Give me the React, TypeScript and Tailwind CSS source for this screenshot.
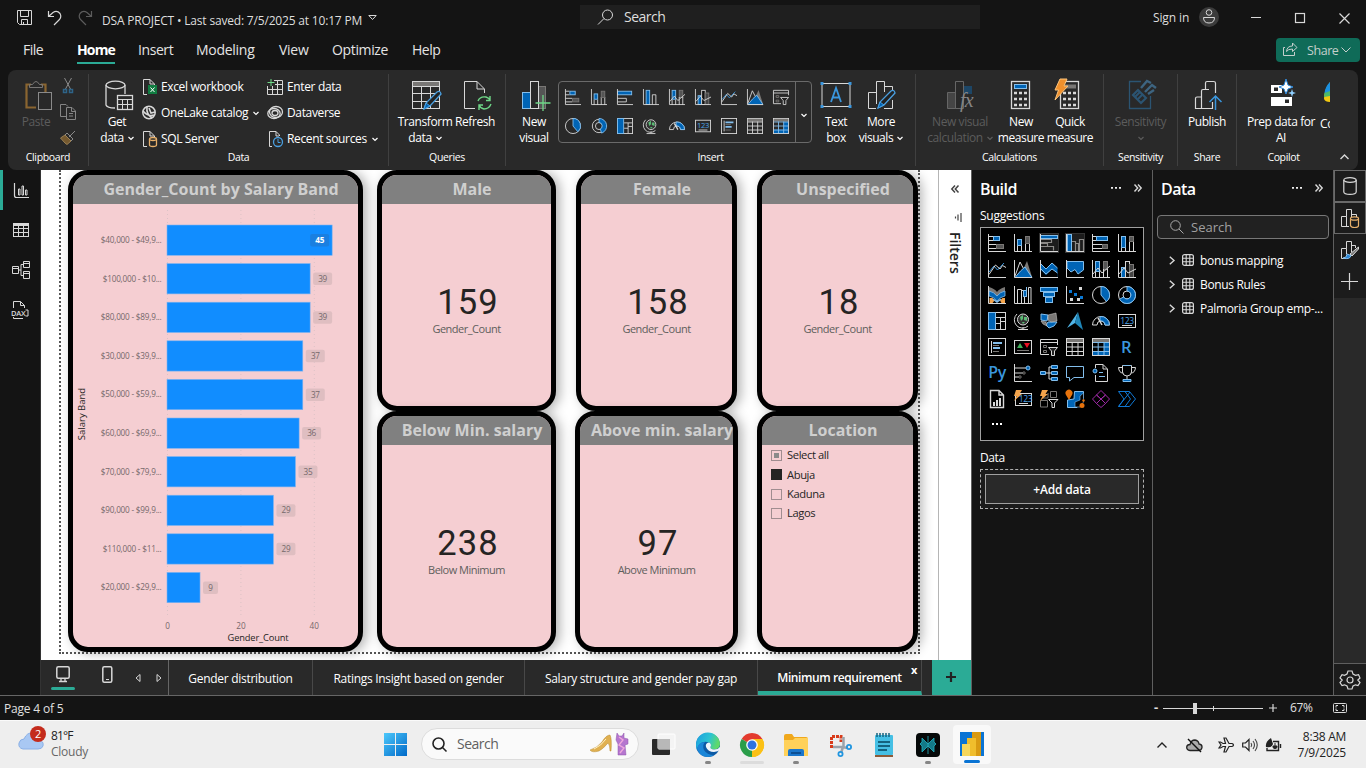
import React from "react";
import type { ReactNode } from "react";

const W = "#d8d8d8";
const B = "#0064b5";
const L = "#83beec";
const G = "#797775";

/* ---------- visual gallery icons, all drawn on an 18 x 18 grid ---------- */

const axis = <path d="M.5 0V17.5H18" stroke={W} fill="none" />;

const visuals: Record<string, ReactNode> = {
  stackedBar: (
    <>
      <path d="M.5 2.5H5M.5 6.5H5M.5 10.5H8M.5 14.5H8" stroke={W} fill="none" />
      <rect x="5.5" y="2.5" width="6" height="4" fill={B} stroke={L} />
      <rect x="8.5" y="10.5" width="7" height="4" fill="#555" stroke={G} />
      {axis}
    </>
  ),
  stackedColumn: (
    <>
      <path d="M3.5 18V12M7.5 18V12M11.5 18V9M15.5 18V9" stroke={W} fill="none" />
      <rect x="3.5" y="5.5" width="4" height="6" fill={B} stroke={L} />
      <rect x="11.5" y="2.5" width="4" height="7" fill="#555" stroke={G} />
      {axis}
    </>
  ),
  clusteredBar: (
    <>
      <rect x=".5" y="2.5" width="16" height="4" fill={B} stroke={L} />
      <path d="M.5 10.5H10.5V14.5H.5" stroke={W} fill="none" />
      {axis}
    </>
  ),
  clusteredColumn: (
    <>
      <rect x="3.5" y="1.5" width="4" height="16" fill={B} stroke={L} />
      <path d="M10.5 17.5V6.5H14.5V17.5" stroke={W} fill="none" />
      {axis}
    </>
  ),
  clusteredBarOn: (
    <>
      <rect x="-.5" y="-.5" width="19" height="19" fill="#1c1c1c" stroke="#333" />
      <rect x=".5" y="1.5" width="17" height="3" fill={B} stroke={L} />
      <path d="M.5 5.5H11.5V8.5H.5M.5 9.5H7.5V12.5H.5M.5 12.5H13.5V16.5" stroke="#8c8a88" fill="none" strokeWidth="1.2" />
      {axis}
    </>
  ),
  clusteredColumnOn: (
    <>
      <rect x="-.5" y="-.5" width="19" height="19" fill="#1c1c1c" stroke="#333" />
      <rect x="1.5" y=".5" width="4" height="17" fill={B} stroke={L} />
      <path d="M6 7.5H9.5V17M9.5 9.5H12.5V17M13.5 17V5.5H17.5V17" stroke="#8c8a88" fill="none" strokeWidth="1.2" />
      {axis}
    </>
  ),
  fullBar: (
    <>
      <path d="M.5 2.5H5M.5 6.5H5M.5 10.5H10M.5 14.5H10" stroke={W} fill="none" />
      <rect x="4.5" y="2.5" width="11" height="4" fill={B} stroke={L} />
      <rect x="10.5" y="10.5" width="5" height="4" fill="#555" stroke={G} />
      {axis}
    </>
  ),
  fullColumn: (
    <>
      <rect x="3.5" y="2.5" width="4" height="11" fill={B} stroke={L} />
      <path d="M3.5 14V18M7.5 14V18M11.5 8V18M15.5 8V18" stroke={W} fill="none" />
      <rect x="11.5" y="2.5" width="4" height="5" fill="#555" stroke={G} />
      {axis}
    </>
  ),
  line: (
    <>
      <path d="M1 12L6 6L9.5 10L16 3" stroke="#3a96dd" fill="none" />
      <path d="M1 14.5L7.5 5L12 9L14.5 5.5L18 7.5" stroke={W} fill="none" />
      {axis}
    </>
  ),
  area: (
    <>
      <path d="M8 12L13 1L18 17H11Z" fill={G} />
      <path d="M1 16L6 2L14 17" stroke={W} fill="none" />
      <path d="M1 17.5L6.5 11L11 7L18 17.5Z" fill={B} stroke={L} />
      {axis}
    </>
  ),
  stackedArea: (
    <>
      <path d="M1 4L6 9L12 3L17.5 8V17H1Z" fill={B} />
      <path d="M1 4L6 9L12 3L17.5 8" fill="none" stroke={L} />
      <path d="M1 10L6 15L12 9L17.5 13V17H1Z" fill="#000" />
      <path d="M1 9L6 14L12 9L17.5 13" fill="none" stroke={L} />
      {axis}
    </>
  ),
  fullArea: (
    <>
      <path d="M1 1.5H17.5V10L12 14L9 9.5L5 12L1 8Z" fill={B} stroke={L} />
      {axis}
    </>
  ),
  comboStacked: (
    <>
      <rect x="3.5" y="1.5" width="4" height="10" fill={B} stroke={L} />
      <rect x="11.5" y="1.5" width="4" height="8" fill="#555" stroke={G} />
      <path d="M3.5 12V18M7.5 12V18M11.5 9V18M15.5 9V18" stroke={W} />
      <path d="M1 14L6 8L10 13L18 6" stroke={W} fill="none" />
      {axis}
    </>
  ),
  comboClustered: (
    <>
      <rect x="3.5" y="7.5" width="4" height="10" fill={B} stroke={L} />
      <rect x="7.5" y="1.5" width="4" height="16" fill="#111" stroke={W} />
      <rect x="11.5" y="4.5" width="4" height="13" fill="#444" stroke={G} />
      <path d="M1 14L6 8L10 13L18 9" stroke={W} fill="none" />
      {axis}
    </>
  ),
  ribbonChart: (
    <>
      <path d="M1 1Q7 3 9 6Q11 3 17 1V8Q12 9 9 13Q6 9 1 8Z" fill={G} />
      <path d="M1 5Q6 6 9 10Q12 6 17 5V10Q12 11 9 15Q6 11 1 10Z" fill={B} stroke={L} strokeWidth=".8" />
      <path d="M1.5 12H4.5L6.5 14.500L4.500 17H1.5ZM17 12H14.500L12 14.500L13.500 17H17Z" fill="#f5a44b" />
      <path d="M5 13L9 16L13 13" stroke={L} strokeWidth="1.5" fill="none" />
      {axis}
    </>
  ),
  waterfall: (
    <>
      <path d="M3.5 17V3.5H7.5V17M7.5 4.5H10.5V17M14.5 17V1.5H17V17" stroke={W} fill="none" />
      <rect x="9.5" y="4.5" width="3" height="6" fill={B} stroke={L} />
      <path d="M12.5 1V10" stroke={L} />
      {axis}
    </>
  ),
  funnel: (
    <>
      <rect x=".5" y="1.5" width="17" height="4" fill={B} stroke={L} />
      <rect x="3.5" y="6.5" width="11" height="4" fill={B} stroke={L} />
      <rect x="5.5" y="11.5" width="7" height="5" fill={B} stroke={L} />
    </>
  ),
  scatter: (
    <>
      <path d="M3 4H6V7H3ZM8 7H11V10H8ZM14 10H17V13H14Z" fill="#0a78d4" />
      <path d="M13 1H16V4H13ZM4 12H7V15H4ZM11 12H14V15H11Z" fill={W} />
      {axis}
    </>
  ),
  pie: (
    <>
      <circle cx="9" cy="9" r="8.5" fill="none" stroke={W} />
      <path d="M9 9V.5A8.5 8.5 0 0 1 14.5 15.5Z" fill={B} stroke={L} />
    </>
  ),
  donut: (
    <>
      <circle cx="9" cy="9" r="8.5" fill="none" stroke={W} />
      <circle cx="9" cy="9" r="4" fill="none" stroke={W} />
      <path d="M9 .5A8.5 8.5 0 1 1 1.6 13.2L5.5 11A4 4 0 1 0 9 5Z" fill={B} stroke={L} />
    </>
  ),
  donutHalf: (
    <>
      <circle cx="9" cy="9" r="7.5" fill="none" stroke={W} />
      <circle cx="9" cy="9" r="4" fill="none" stroke={W} />
      <path d="M9 .5A8.5 8.5 0 0 1 12 17L10.5 12.5A4 4 0 0 0 9 5Z" fill={B} stroke={L} />
    </>
  ),
  treemap: (
    <>
      <rect x=".5" y=".5" width="17" height="17" fill="none" stroke={W} />
      <rect x=".5" y=".5" width="7" height="17" fill={B} stroke={L} />
      <path d="M8 5.5H17M12.5 5.5V17M8 11.5H12.5M12.5 9.5H17" stroke={W} />
    </>
  ),
  globe: (
    <>
      <circle cx="9" cy="7.5" r="5.5" fill="#333" stroke={W} />
      <path d="M6 5L9 3L9 7L7 9ZM10 5L13 5L13 9L10 8ZM8 10L11 10L9 12Z" fill="#5bb974" />
      <path d="M3 2A8 8 0 0 0 14 14M9 15V17M4 17.5H14" stroke={W} fill="none" />
    </>
  ),
  shapeMap: (
    <>
      <path d="M1 2L8 3L7 9L1 8ZM8 10H17L14 14L9 16L6 13Z" fill={B} stroke={L} />
      <path d="M8 3L16 1L17 9L11 10L8 8ZM1 9L6 10L7 14L3 12Z" fill={G} stroke={W} strokeWidth=".5" />
    </>
  ),
  azure: (
    <>
      <path d="M12 0L1 16L9 11Z" fill="#50b4e6" />
      <path d="M12 0L17 18L9 11Z" fill="#1f86b8" />
    </>
  ),
  gauge: (
    <>
      <path d="M.5 13A8.5 8.5 0 0 1 17.5 13H13A4 4 0 0 0 5 13Z" fill="none" stroke={W} />
      <path d="M8 4.5A8.5 8.5 0 0 1 17.5 13H13A4 4 0 0 0 8 9Z" fill={B} stroke={L} />
      <path d="M6 6L10 13" stroke={W} strokeWidth="1.5" />
    </>
  ),
  card: (
    <>
      <rect x=".5" y="2.5" width="17" height="13" fill="none" stroke={W} />
      <text x="9" y="11.5" fontSize="8.5" textAnchor="middle" fill="#4aa3e8" fontFamily="Open Sans">123</text>
      <path d="M4 13.5H14" stroke={W} />
    </>
  ),
  multiCard: (
    <>
      <rect x=".5" y=".5" width="17" height="17" fill="none" stroke={W} />
      <path d="M3.5 3V15" stroke={W} />
      <path d="M5 5H14M5 10H12" stroke={L} strokeWidth="2" />
      <path d="M5 7.5H11M5 13.5H11" stroke={G} />
    </>
  ),
  kpi: (
    <>
      <rect x=".5" y="2.5" width="17" height="13" fill="none" stroke={W} />
      <path d="M3 10L6 5L9 10Z" fill="#3fae5a" />
      <path d="M10 5H16L13 10Z" fill="#e81123" />
      <path d="M3 12.5H15" stroke={G} />
    </>
  ),
  slicer: (
    <>
      <path d="M9 16.5H.5V1.5H17.5V7M.5 4.5H17.5" fill="none" stroke={W} />
      <path d="M3.5 7.5H6.5V9.5H3.5ZM3.5 12.5H6.5V14.5H3.5Z" fill="none" stroke={G} />
      <path d="M8.5 9.5H17.5L14.5 13V17.5H11.5V13Z" fill="#222" stroke={W} />
    </>
  ),
  table: (
    <>
      <rect x=".5" y=".5" width="17" height="17" fill="none" stroke={W} />
      <rect x="1" y="1" width="16" height="3" fill={G} />
      <path d="M1 4.5H17M1 9H17M1 13.5H17M6.2 4V17M12 4V17" stroke={W} />
    </>
  ),
  matrix: (
    <>
      <rect x="6" y="13" width="12" height="5" fill={B} />
      <rect x="12" y="4" width="6" height="14" fill={B} />
      <rect x=".5" y="13" width="6" height="4.5" fill={B} />
      <rect x=".5" y=".5" width="17" height="17" fill="none" stroke={W} />
      <rect x="1" y="1" width="16" height="3" fill={G} />
      <path d="M1 4.5H17M1 9H17M1 13.5H17M6.2 4V17M12 4V17" stroke={L} />
    </>
  ),
  r: <text x="8" y="15" fontSize="16.5" textAnchor="middle" fill="#3a96dd" fontFamily="Open Sans" fontWeight="600">R</text>,
  py: <text x="9" y="14" fontSize="16" textAnchor="middle" fill="#3a96dd" fontFamily="Open Sans" fontWeight="600">Py</text>,
  influencers: (
    <>
      <path d="M1 4H13M1 9H9M1 13H5" stroke={W} />
      <circle cx="14" cy="4" r="2" fill={B} stroke={L} />
      <circle cx="10" cy="9" r="1.2" fill="none" stroke={G} />
      <circle cx="6" cy="13" r="1.2" fill="none" stroke={G} />
      {axis}
    </>
  ),
  tree: (
    <>
      <path d="M5 9H12M9 3V15M9 3H12M9 15H12" stroke={W} fill="none" />
      <path d="M.5 7.5H5.5V10.5H.5ZM11.5 1.5H17.5V4.5H11.5ZM11.5 7.5H17.5V10.5H11.5ZM11.5 13.5H17.5V16.5H11.5Z" fill={B} stroke={L} />
    </>
  ),
  qa: <path d="M.5 2.5H17.5V13.5H8L3.5 17V13.5H.5Z" fill="none" stroke={L} />,
  narrative: (
    <>
      <path d="M3.5 4V.5H11L15.5 5V17.5H3.5V11M11 .5V5H15" fill="none" stroke={W} />
      <path d="M7 8.5H11M7 12.5H13" stroke={L} />
      <circle cx="3" cy="7" r="2" fill={B} stroke={L} />
    </>
  ),
  trophy: (
    <>
      <path d="M4.5 1.5H13.5V8Q13 12 9 12Q5 12 4.5 8ZM4.5 3.5H.5Q1 9 5 9M13.5 3.5H17.5Q17 9 13 9M9 12V15" fill="none" stroke={W} />
      <path d="M5 17.5V15.5H13V17.5ZM5 1.5H13" fill={B} stroke={L} />
    </>
  ),
  paginated: (
    <>
      <path d="M2.5 .5H11L15.5 5V17.5H2.5ZM11 .5V5H15" fill="none" stroke={W} strokeWidth="1.4" />
      <path d="M5 12H7V16H5ZM8 10H10V16H8ZM11 8H13V16H11Z" fill={W} />
    </>
  ),
  cardNew: (
    <>
      <rect x="1.5" y="3.5" width="16" height="12" fill="none" stroke={W} />
      <text x="11.5" y="12" fontSize="8.5" textAnchor="middle" fill="#4aa3e8" fontFamily="Open Sans">123</text>
      <path d="M5 13.5H14" stroke={W} />
      <path d="M2 0H8L5.5 4H8L0 11L2.5 6H0Z" fill="#f5a44b" />
    </>
  ),
  slicerNew: (
    <>
      <path d="M10.5 1.5H16.5V7.5H10.5ZM.5 10.5H7.5V17H.5ZM3 4V8H8V3" fill="none" stroke={G} />
      <path d="M8.5 9.5H18L14.5 13V17.5H12V13Z" fill="#000" stroke={W} />
      <path d="M2 0H8L5.5 4H8L0 11L2.5 6H0Z" fill="#f5a44b" />
    </>
  ),
  arcgis: (
    <>
      <path d="M8.5 1.500H17.5V8L13 13L11 17.5H1.500V10L8 9Z" fill={B} stroke={L} />
      <path d="M17.500 3L14 6V10L9 12V17H14L17.500 12Z" fill="#000" stroke={L} strokeWidth=".6" />
      <path d="M3 10L0 5A3.5 3.5 0 1 1 6 5Z" fill="#e8730c" />
      <circle cx="16" cy="15.5" r="2.5" fill="#e8730c" />
      <circle cx="17.5" cy="10.5" r="1.2" fill="#e8730c" />
    </>
  ),
  powerApps: (
    <path d="M9 .5L13.5 5L9 9L4.5 5ZM4.5 5L9 9L4.5 13.5L.5 9ZM13.5 5L17.5 9L13.5 13.5L9 9ZM9 9L13.5 13.5L9 17.5L4.5 13.5Z" fill="none" stroke="#a02aa8" />
  ),
  automate: (
    <path d="M.5 1.5H11.5L17.5 9L11.5 16.5H.5L6 9ZM7 1.5L12.5 9L7 16.5M.5 16.5L12 2" fill="none" stroke="#0f78d4" />
  ),
};

function Visual({ name, size = 18 }: { name: string; size?: number }) {
  return (
    <svg width={size} height={size} viewBox="0 0 18 18" className="shrink-0 overflow-visible">
      {visuals[name]}
    </svg>
  );
}

function Svg({ w, h, children, className = "" }: { w: number; h: number; children: ReactNode; className?: string }) {
  return (
    <svg width={w} height={h} viewBox={`0 0 ${w} ${h}`} fill="none" stroke={W} className={`shrink-0 overflow-visible ${className}`}>
      {children}
    </svg>
  );
}

function Chevron({ className = "" }: { className?: string }) {
  return (
    <Svg w={6} h={4} className={`inline-block align-middle ${className}`}>
      <path d="M.5 0L3 2.5L5.5 0" stroke="currentColor" strokeWidth="1.2" />
    </Svg>
  );
}

/* ---------- title bar and menu ---------- */

function TitleBar() {
  return (
    <header className="flex h-[34px] items-center text-[#dedede]">
      <Svg w={16} h={16} className="ml-[17px] mt-px">
        <path d="M.5 .5H14.5V14.5H2.5L.5 12.5ZM3.5 .5V6.5H11.5V.5M4.5 14.5V9.5H10.5V14.5M6.5 12V14" />
      </Svg>
      <Svg w={16} h={16} className="ml-[14px] mt-px">
        <path d="M1.5 1V6.5H7M1.5 6.5L6 2.5Q10 0 13 3.5Q15 7 12 10L7 15" strokeWidth="1.2" />
      </Svg>
      <Svg w={16} h={16} className="ml-[14px] mt-px">
        <path d="M14.5 1V6.5H9M14.5 6.5L10 2.5Q6 0 3 3.5Q1 7 4 10L9 15" stroke="#5c5c5c" strokeWidth="1.2" />
      </Svg>
      <span className="ml-[9px] mt-[7px] w-[266px] whitespace-nowrap text-[12px] tracking-[-0.015em]!">DSA PROJECT • Last saved: 7/5/2025 at 10:17 PM</span>
      <Svg w={9} h={6} className="mt-0.5">
        <path d="M.8 .5H8.2L4.5 4.5Z" />
      </Svg>
      <div className="ml-[203px] flex h-6 w-[400px] items-center bg-[#1f1f1f] pl-[17px]">
        <Svg w={17} h={17}>
          <circle cx="10.5" cy="6" r="5" />
          <path d="M7 9.5L1 15.5" />
        </Svg>
        <span className="-mt-px ml-[10px] text-[14px]">Search</span>
      </div>
      <span className="ml-[173px] mt-px w-[46px] text-[12px] tracking-[-0.01em]!">Sign in</span>
      <Svg w={20} h={20}>
        <circle cx="10" cy="10" r="10" fill="#3b3b3b" stroke="none" />
        <circle cx="10" cy="5.5" r="2.8" />
        <path d="M4.5 10.5H15.5Q15.5 16 10 16Q4.5 16 4.5 10.5Z" />
      </Svg>
      <Svg w={10} h={10} className="ml-8">
        <path d="M0 5.5H10" />
      </Svg>
      <Svg w={10} h={10} className="ml-[34px] mt-0.5">
        <rect x=".5" y=".5" width="9" height="9" strokeWidth="1.2" />
      </Svg>
      <Svg w={11} h={11} className="ml-[34px] mt-0.5">
        <path d="M.5 .5L10.5 10.5M10.5 .5L.5 10.5" strokeWidth="1.2" />
      </Svg>
    </header>
  );
}

function Menu() {
  return (
    <nav className="flex h-9 items-start pt-1.5 text-[14px] leading-5 text-[#e4e4e4]">
      <span className="ml-[23px] w-[54px]">File</span>
      <span className="w-[61px]">
        <span className="inline-block w-[38px] border-b-2 border-[#2bab96] pb-0.5 font-bold tracking-[-0.06em]! text-white">Home</span>
      </span>
      <span className="w-[58px] tracking-[-0.03em]!">Insert</span>
      <span className="w-[83px] tracking-[-0.02em]!">Modeling</span>
      <span className="w-[53px] tracking-[-0.02em]!">View</span>
      <span className="w-[80px] tracking-[-0.025em]!">Optimize</span>
      <span className="w-[864px]">Help</span>
      <div className="-mt-0.5 flex h-6 w-[84px] items-center rounded bg-[#0f6b58] pl-[7px] text-[12.5px] text-[#c4cfcc]">
        <Svg w={15} h={14} className="-mt-0.5">
          <path d="M2 5.5H.5V13.5H11.5V10M3.5 9.5Q4 4 9.5 4V1L14 5.5L9.5 9.5V7Q5 7 3.5 9.5Z" stroke="#c4cfcc" />
        </Svg>
        <span className="ml-[9px] mt-px w-[34px]">Share</span>
        <Svg w={10} h={6}>
          <path d="M.5 .5L5 5L9.5 .5" stroke="#c4cfcc" />
        </Svg>
      </div>
    </nav>
  );
}

/* ---------- ribbon ---------- */

function Group({ label, className, children }: { label: string; className: string; children: ReactNode }) {
  return (
    <section className={`flex shrink-0 flex-col ${className}`}>
      <div className="flex h-[80px]">{children}</div>
      <div className="text-center text-[10.5px] leading-[14px] text-white">{label}</div>
    </section>
  );
}

function Sep() {
  return <div className="my-1 w-px shrink-0 bg-[#404040]" />;
}

function Big({ icon, lines, className, arrow, muted }: { icon: ReactNode; lines: string[]; className: string; arrow?: boolean; muted?: boolean }) {
  return (
    <div className={`flex shrink-0 flex-col items-center whitespace-nowrap pt-[10px] text-[12px] leading-4 ${muted ? "text-[#5c5c5c]" : "text-white"} ${className}`}>
      <div className="flex h-[34px] items-start justify-center">{icon}</div>
      {lines.map((t, i) => (
        <div key={t + i}>
          {t}
          {arrow && i === lines.length - 1 && <Chevron className={t ? "ml-1" : ""} />}
        </div>
      ))}
    </div>
  );
}

function Small({ icon, label, arrow }: { icon: ReactNode; label: string; arrow?: boolean }) {
  return (
    <div className="flex h-[26px] items-center whitespace-nowrap text-[12px] text-white">
      <span className="flex w-[19px] shrink-0">{icon}</span>
      <span className="tracking-[-0.03em]!">{label}</span>
      {arrow && <Chevron className="ml-[5px] mt-0.5" />}
    </div>
  );
}

const pencil = (
  <g>
    <path d="M-8 9L-6 3L5 -8Q8 -10 9 -6L-2 6Z" fill="#222" stroke="#4a9fe0" strokeWidth="1.3" />
    <path d="M-8 9L-6 3L-2 6Z" fill={B} stroke="#4a9fe0" />
  </g>
);

const galleryTop = ["stackedBar", "stackedColumn", "clusteredBar", "clusteredColumn", "comboStacked", "comboClustered", "line", "area", "slicer"];
const galleryBottom = ["pie", "donutHalf", "treemap", "globe", "gauge", "card", "multiCard", "table", "matrix"];

function Ribbon() {
  return (
    <div className="mx-2 flex h-[100px] rounded-lg bg-[#292929]">
      <Group label="Clipboard" className="w-[80px]">
        <Big
          muted
          className="ml-[10px] w-9"
          lines={["Paste"]}
          icon={
            <Svg w={28} h={32} className="ml-1.5">
              <path d="M6 4.5H1.5V27.5H11M16 4.5H20.5V12" stroke="#8a6530" strokeWidth="2.2" />
              <path d="M4.5 7.5V4.5H7.5Q11 -1.5 14.5 4.5H17.5V7.5Z" stroke={G} />
              <rect x="13.5" y="12.5" width="13" height="17" fill="#292929" stroke="#8a8a8a" />
            </Svg>
          }
        />
        <div className="ml-[6px] flex flex-col pt-2">
          <Svg w={16} h={16}>
            <path d="M4.5 0L10.5 11M11.5 0L5.5 11" stroke="#8a8a8a" />
            <path d="M3.5 11.5H6.5V14.5H3.5ZM9.5 11.5H12.5V14.5H9.5Z" stroke="#2e6489" strokeWidth="1.5" />
          </Svg>
          <Svg w={16} h={16} className="mt-[10px]">
            <path d="M6 12.5H.5V.5H6L8 2.5M6.5 3.5H12L15.5 7V15.5H6.5ZM11.5 4V7.5H15M9 9.5H13M9 12H13" stroke="#858585" />
          </Svg>
          <Svg w={16} h={16} className="mt-[10px]">
            <path d="M15 1L9 7M5 5L11 11M7 3L13 9L11 11L5 5Z" stroke="#8a8a8a" />
            <path d="M.5 8L5 5L11 11L7 14.5L5 13Z" fill="#75592f" stroke="#9a8055" />
          </Svg>
        </div>
      </Group>
      <Sep />
      <Group label="Data" className="w-[299px]">
        <Big
          arrow
          className="ml-1 w-[48px]"
          lines={["Get", "data"]}
          icon={
            <Svg w={28} h={32} className="ml-1">
              <ellipse cx="10.5" cy="5" rx="9.5" ry="3.8" strokeWidth="1.3" />
              <path d="M1 5V25Q2 28 10 28M20 5V14" strokeWidth="1.3" />
              <rect x="12.5" y="15.5" width="15" height="14" fill="#292929" strokeWidth="1.3" />
              <path d="M13 19.5H27M13 24.5H27M17.5 20V29M22.5 20V29" />
            </Svg>
          }
        />
        <div className="ml-[1px] w-[125px] pt-1">
          <Small
            label="Excel workbook"
            icon={
              <Svg w={16} h={16}>
                <path d="M5 15.5H1.5V.5H8L12.5 5V7M8 .5V5H12" />
                <rect x="6" y="6" width="9" height="9" fill="#107c41" stroke="none" />
                <path d="M8.5 8.5L12.5 13M12.5 8.5L8.5 13" stroke="#fff" />
              </Svg>
            }
          />
          <Small
            arrow
            label="OneLake catalog"
            icon={
              <Svg w={16} h={16}>
                <circle cx="7" cy="7.5" r="6.2" strokeWidth="1.5" />
                <path d="M1 6Q6 12 12 10M5 2Q4 9 10 13M7 3L9 8L13 7" strokeWidth="1.6" />
              </Svg>
            }
          />
          <Small
            label="SQL Server"
            icon={
              <Svg w={16} h={16}>
                <path d="M5 15.5H1.5V.5H8L12.5 5V6M8 .5V5H12" />
                <path d="M7.5 8V14Q7.5 15.5 11 15.5Q14.5 15.5 14.5 14V8" stroke="#e8b06a" strokeWidth="1.3" />
                <ellipse cx="11" cy="8" rx="3.5" ry="1.5" stroke="#e8b06a" strokeWidth="1.3" />
              </Svg>
            }
          />
        </div>
        <div className="ml-px pt-1">
          <Small
            label="Enter data"
            icon={
              <Svg w={16} h={16} className="-ml-px">
                <path d="M7 1.5H15.5V15.5H.5V7M8 5.5H15M1 10.5H15M5.5 7V15M10.5 2V15" />
                <path d="M4 0V7M.5 3.5H7.5" stroke="#6fd888" />
              </Svg>
            }
          />
          <Small
            label="Dataverse"
            icon={
              <Svg w={16} h={16} className="-ml-px">
                <ellipse cx="9" cy="7" rx="6.5" ry="5.5" strokeWidth="1.3" />
                <ellipse cx="7" cy="8.5" rx="6.2" ry="5" strokeWidth="1.3" />
                <ellipse cx="8" cy="8" rx="3" ry="2.5" strokeWidth="1.3" />
              </Svg>
            }
          />
          <Small
            arrow
            label="Recent sources"
            icon={
              <Svg w={16} h={16} className="-ml-px">
                <path d="M5 15.5H2.5V.5H9L12.5 4V5M9 .5V5H12" />
                <circle cx="11" cy="11" r="4.5" stroke="#4a9fe0" strokeWidth="1.3" />
                <path d="M11 8V11.5H13.5" stroke="#4a9fe0" />
              </Svg>
            }
          />
        </div>
      </Group>
      <Sep />
      <Group label="Queries" className="w-[116px]">
        <Big
          arrow
          className="ml-2 w-[56px]"
          lines={["Transform", "data"]}
          icon={
            <Svg w={30} h={32} className="ml-1">
              <rect x=".5" y="1.5" width="27" height="27" />
              <rect x="1" y="2" width="26" height="4" fill={G} stroke="none" />
              <path d="M1 6.5H27M1 13.5H27M1 21.5H27M9.5 7V28M18.5 7V28" />
              <g transform="translate(20 20)">{pencil}</g>
            </Svg>
          }
        />
        <Big
          className="w-[44px]"
          lines={["Refresh"]}
          icon={
            <Svg w={28} h={32} className="ml-1.5">
              <path d="M11 28.5H.5V1.5H13L20.5 9V13M13 1.5V9H20" />
              <path d="M14 21Q16 16 22 17Q25 18 26 20M26 16V20.5H22M27 24Q25 29 20 29Q16 28 15 25M15 30V25H19" stroke="#6fd888" strokeWidth="1.4" />
            </Svg>
          }
        />
      </Group>
      <Sep />
      <Group label="Insert" className="w-[409px]">
        <Big
          className="ml-1.5 w-[44px]"
          lines={["New", "visual"]}
          icon={
            <Svg w={30} h={32} className="ml-[3px]">
              <rect x="1.5" y="12.5" width="8" height="16" fill={B} stroke={L} />
              <rect x="17.5" y="6.5" width="7" height="22" fill="#555" stroke={G} />
              <rect x="9.5" y="1.5" width="8" height="27" fill="#292929" />
              <path d="M22 15V31M14.5 23H29.5" stroke="#6fd888" strokeWidth="1.3" />
            </Svg>
          }
        />
        <div className="ml-0.5 mt-[11px] flex h-[62px] w-[254px] rounded border border-[#6a6a6a]">
          <div className="flex w-[236px] flex-col gap-[13px] pl-[6px] pt-[7px]">
            <div className="flex gap-[10px]">
              {galleryTop.map((n) => (
                <Visual key={n} name={n} size={16} />
              ))}
            </div>
            <div className="flex gap-[10px]">
              {galleryBottom.map((n) => (
                <Visual key={n} name={n} size={16} />
              ))}
            </div>
          </div>
          <div className="flex flex-1 items-center justify-center border-l border-[#6a6a6a] pt-2 text-white">
            <Chevron />
          </div>
        </div>
        <Big
          className="ml-0.5 w-[44px]"
          lines={["Text", "box"]}
          icon={
            <Svg w={32} h={32}>
              <rect x="2" y="3.5" width="28" height="23" />
              <path d="M.5 2H3.5V5H.5ZM28.5 2H31.5V5H28.5ZM.5 25H3.5V28H.5ZM28.5 25H31.5V28H28.5Z" fill="#3a96dd" stroke="none" />
              <path d="M11 22L16 8L21 22M12.5 17.5H19.5" stroke="#3a96dd" strokeWidth="1.8" />
            </Svg>
          }
        />
        <Big
          arrow
          className="w-[46px]"
          lines={["More", "visuals"]}
          icon={
            <Svg w={30} h={32} className="ml-0.5">
              <path d="M9 28.5H1.5V12.5H9.5M9.5 24V1.5H17.5V12M17.5 6.5H25.5V10M25.5 20V28.5H17" />
              <g transform="translate(19 19)">{pencil}</g>
            </Svg>
          }
        />
      </Group>
      <Sep />
      <Group label="Calculations" className="w-[187px]">
        <Big
          muted
          arrow
          className="ml-[7px] w-[74px]"
          lines={["New visual", "calculation"]}
          icon={
            <Svg w={30} h={32} className="ml-0.5">
              <path d="M1.5 12.5H9.5V28.5H1.5Z" fill="#454545" stroke="#666" />
              <path d="M9.5 1.5H17.5V28.5H9.5Z" stroke="#666" />
              <path d="M18 6H26V14H18Z" fill="#1d4666" stroke="none" />
              <text x="14" y="27" fontSize="20" fill="#858585" stroke="none" fontFamily="Liberation Serif" fontStyle="italic">fx</text>
            </Svg>
          }
        />
        <Big
          className="w-[48px]"
          lines={["New", "measure"]}
          icon={
            <Svg w={20} h={32}>
              <rect x=".5" y="1.5" width="18" height="27" strokeWidth="1.3" />
              <rect x="3.5" y="4.5" width="12" height="4" fill={B} stroke={L} />
              <path d="M3 13H16M3 19H16M3 25H16" strokeWidth="2.5" strokeDasharray="3 2" />
            </Svg>
          }
        />
        <Big
          className="w-[50px]"
          lines={["Quick", "measure"]}
          icon={
            <Svg w={26} h={32} className="-ml-1.5">
              <rect x="6.5" y="1.5" width="18" height="27" strokeWidth="1.3" />
              <rect x="11" y="4.5" width="11" height="4" fill={G} stroke="none" />
              <path d="M9 13H22M9 19H22M9 25H22" strokeWidth="2.5" strokeDasharray="3 2" />
              <path d="M6 -1H13L10 6H14L1 20L4.5 10H1Z" fill="#f0902c" stroke="#fbc37a" />
            </Svg>
          }
        />
      </Group>
      <Sep />
      <Group label="Sensitivity" className="w-[73px]">
        <Big
          muted
          arrow
          className="w-full"
          lines={["Sensitivity", ""]}
          icon={
            <Svg w={30} h={32}>
              <path d="M15 1.5H3.5V28.5H24.5V16" stroke="#2b5472" strokeWidth="1.3" />
              <path d="M7 15L12 10L20 18L15 23Z" stroke="#2b5472" strokeWidth="2.2" />
              <path d="M9 17L14 12M12 19L17 14" stroke="#2b5472" strokeWidth="2" />
              <path d="M15 8L21 1L25 3M19 12L26 5L30 8M22 14L28 10" stroke="#3d6480" strokeWidth="2.4" />
            </Svg>
          }
        />
      </Group>
      <Sep />
      <Group label="Share" className="w-[58px]">
        <Big
          className="w-full"
          lines={["Publish"]}
          icon={
            <Svg w={30} h={32} className="ml-1">
              <path d="M1.5 28.5V18.5Q1.5 17 3 17H7.5V28.5ZM7.5 17V11Q7.5 9.5 9 9.5H15M7.5 28.5H18.5V22M11.5 9V3Q11.5 1.5 13 1.5H19.5Q21.5 1.5 21.5 3V13" strokeWidth="1.2" />
              <path d="M21.5 30V16M15.5 22L21.5 16L27.5 22" stroke="#3a96dd" strokeWidth="1.5" />
            </Svg>
          }
        />
      </Group>
      <Sep />
      <Group label="Copilot" className="w-[93px] overflow-hidden">
        <Big
          className="ml-[9px] w-[70px]"
          lines={["Prep data for", "AI"]}
          icon={
            <Svg w={26} h={32} className="ml-0.5">
              <path d="M2 5H13V13H2ZM2 17H23V26H2Z" fill="#fff" stroke="none" />
              <path d="M5 7.5H9V11H5ZM16 19.5H20V23H16Z" fill="#292929" stroke="none" />
              <path d="M17 -1L19 5L24 7L19 9L17 14L15 9L10 7L15 5Z" fill="#fff" stroke="#2a86d8" />
              <path d="M23 9L24 12L27 13L24 14L23 17L22 14L19 13L22 12Z" fill="#8fd0ff" stroke="none" />
            </Svg>
          }
        />
        <div className="ml-[4px] w-[10px] shrink-0 overflow-hidden pt-[10px] text-[12px] leading-4 text-white">
          <div className="h-[34px]">
            <Svg w={20} h={20} className="mt-0.5">
              <path d="M10 0Q4 8 4 17Q5 20 10 20Z" fill="#f2c811" stroke="none" />
              <path d="M10 0Q5 5 4.5 11H10Z" fill="#1a90e0" stroke="none" />
              <path d="M4.5 11L4 15L10 14V9Z" fill="#4bb86a" stroke="none" />
            </Svg>
          </div>
          Co
        </div>
      </Group>
      <div className="flex flex-1 items-end pb-[10px] pl-[10px]">
        <Svg w={9} h={6}>
          <path d="M.5 5L4.5 1L8.5 5" strokeWidth="1.4" />
        </Svg>
      </div>
    </div>
  );
}

/* ---------- report canvas ---------- */

const bands: [string, number][] = [
  ["$40,000 - $49,9...", 45],
  ["$100,000 - $10...", 39],
  ["$80,000 - $89,9...", 39],
  ["$30,000 - $39,9...", 37],
  ["$50,000 - $59,9...", 37],
  ["$60,000 - $69,9...", 36],
  ["$70,000 - $79,9...", 35],
  ["$90,000 - $99,9...", 29],
  ["$110,000 - $11...", 29],
  ["$20,000 - $29,9...", 9],
];

function BandChart() {
  return (
    <svg width="284" height="442" viewBox="73 204 284 442" fontFamily="Open Sans" className="shrink-0">
      {[0, 20, 40].map((v) => (
        <g key={v}>
          <path d={`M${167.5 + v * 3.67} 210V616`} stroke="#dcc3c6" strokeDasharray="1 3" />
          <text x={167.5 + v * 3.67} y="629" fontSize="8.2" fill="#75686b" textAnchor="middle" className="tracking-[0em]!">{v}</text>
        </g>
      ))}
      {bands.map(([name, v], i) => {
        const y = 225 + i * 38.6;
        const end = 167 + v * 3.67;
        const inside = v === 45;
        const w = v < 10 ? 15 : 19;
        const bx = inside ? end - 22 : end + 3;
        return (
          <g key={name}>
            <text x="161.5" y={y + 18} fontSize="8.2" fill="#75686b" textAnchor="end" className="tracking-[-0.025em]!">{name}</text>
            <rect x="167" y={y} width={v * 3.67} height="30.3" fill="#118dff" stroke="#7fb3f0" strokeWidth=".6" />
            <rect x={bx} y={y + 9} width={w} height="12.5" rx="2" fill={inside ? "#1a7fe0" : "#dfbec1"} />
            <text x={bx + w / 2} y={y + 18.2} fontSize="8.2" textAnchor="middle" fill={inside ? "#fff" : "#75686b"} fontWeight={inside ? 700 : 400}>{v}</text>
          </g>
        );
      })}
      <text x="258" y="641" fontSize="9.3" fill="#252423" textAnchor="middle" className="tracking-[-0.015em]!">Gender_Count</text>
      <text transform="translate(85 414) rotate(-90)" fontSize="9.5" fill="#252423" textAnchor="middle" className="tracking-[0em]!">Salary Band</text>
    </svg>
  );
}

function Card({ title, className, children }: { title: string; className: string; children: ReactNode }) {
  return (
    <article className={`flex shrink-0 flex-col overflow-hidden rounded-[20px] border-[5px] border-black bg-[#f5ced2] shadow-[4px_1px_12px_rgba(0,0,0,0.3)] ${className}`}>
      <h3 className="flex h-[29px] shrink-0 items-center justify-center whitespace-nowrap bg-[#808080] pb-0.5 pl-[11px] text-[16px] font-bold text-[#cfcfcf]">
        <span className="tracking-[0em]!">{title}</span>
      </h3>
      {children}
    </article>
  );
}

function Metric({ title, value, label, className }: { title: string; value: string; label: string; className: string }) {
  return (
    <Card title={title} className={`h-[241px] ${className}`}>
      <div className="flex flex-col items-center pt-[80px]">
        <div className="pl-[3px] font-[Roboto] text-[34.5px] leading-9 text-[#252423]">
          <span className="tracking-[0.03em]!">{value}</span>
        </div>
        <div className="mt-px text-[11px] leading-4 text-[#605e5c]">
          <span className="tracking-[-0.045em]!">{label}</span>
        </div>
      </div>
    </Card>
  );
}

function Check({ label, state }: { label: string; state: "some" | "on" | "off" }) {
  return (
    <div className="flex h-[19.3px] items-center text-[11.2px] text-[#252423]">
      <span className={`flex h-[11px] w-[11px] items-center justify-center border ${state === "on" ? "border-[#252423] bg-[#252423]" : "border-[#a08d90]"}`}>
        {state === "some" && <span className="h-[5px] w-[5px] bg-[#8a8a8a]" />}
      </span>
      <span className="ml-[5px]">{label}</span>
    </div>
  );
}

function Report() {
  return (
    <div className="h-[490px] w-[897px] shrink-0 overflow-hidden bg-white pl-[18px]">
      <div className="flex h-[484px] w-[861px] border-2 border-t-0 border-dotted border-[#555] pl-[7px]">
        <Card title="Gender_Count by Salary Band" className="h-[482px] w-[295px]">
          <BandChart />
        </Card>
        <div className="ml-[14px] shrink-0">
          <Metric title="Male" value="159" label="Gender_Count" className="w-[179px]" />
          <Metric title="Below Min. salary" value="238" label="Below Minimum" className="w-[179px]" />
        </div>
        <div className="ml-[19px] shrink-0">
          <Metric title="Female" value="158" label="Gender_Count" className="ml-px w-[161px]" />
          <Metric title="Above min. salary" value="97" label="Above Minimum" className="w-[163px]" />
        </div>
        <div className="ml-[19px] shrink-0">
          <Metric title="Unspecified" value="18" label="Gender_Count" className="w-[161px]" />
          <Card title="Location" className="h-[241px] w-[161px]">
            <div className="pl-[9px] pt-px">
              <Check label="Select all" state="some" />
              <Check label="Abuja" state="on" />
              <Check label="Kaduna" state="off" />
              <Check label="Lagos" state="off" />
            </div>
          </Card>
        </div>
      </div>
    </div>
  );
}

function Filters() {
  return (
    <aside className="flex h-[490px] w-[33px] flex-col items-center border-l border-[#b5b5b5] bg-white pt-[15px]">
      <Svg w={8} h={8}>
        <path d="M4 .5L.8 4L4 7.5M7.5 .5L4.3 4L7.5 7.5" stroke="#444" strokeWidth="1.5" />
      </Svg>
      <Svg w={9} h={9} className="ml-1 mt-[20px]">
        <path d="M8 0V9M5 1.5V7.5M2.5 3.5V5.5" stroke="#444" strokeWidth="1.2" />
      </Svg>
      <span className="mt-[10px] text-[14px] font-semibold leading-5 text-[#222] [writing-mode:vertical-rl]">
        <span className="tracking-[0em]!">Filters</span>
      </span>
    </aside>
  );
}

function Tab({ label, className }: { label: string; className: string }) {
  return (
    <div className={`flex h-[35px] shrink-0 items-center justify-center whitespace-nowrap border-r border-[#484848] pt-0.5 text-[12px] text-white ${className}`}>
      <span className="tracking-[-0.024em]!">{label}</span>
    </div>
  );
}

function PageTabs() {
  return (
    <div className="flex h-[35px] bg-[#292929]">
      <div className="flex w-[128px] shrink-0 items-center border-r border-[#666]">
        <div className="ml-[10px] flex w-6 flex-col items-center">
          <Svg w={16} h={17}>
            <rect x="1.8" y=".8" width="12.4" height="11.5" rx="1.5" strokeWidth="1.5" />
            <path d="M6 12.5V15M10 12.5V15M4 15.5H12" strokeWidth="1.3" />
          </Svg>
          <div className="mt-[4px] h-[3px] w-6 rounded bg-[#2bab96]" />
        </div>
        <Svg w={10} h={17} className="-mt-1.5 ml-[27px]">
          <rect x=".8" y=".8" width="9" height="15.5" rx="1.5" strokeWidth="1.5" />
          <path d="M4 13.5H7" />
        </Svg>
        <Svg w={6} h={8} className="ml-[23px]">
          <path d="M5 .5V7.5L1 4Z" />
        </Svg>
        <Svg w={6} h={8} className="ml-[15px]">
          <path d="M1 .5V7.5L5 4Z" />
        </Svg>
      </div>
      <Tab label="Gender distribution" className="w-[144px]" />
      <Tab label="Ratings Insight based on gender" className="w-[212px]" />
      <Tab label="Salary structure and gender pay gap" className="w-[233px]" />
      <div className="relative flex h-[35px] w-[164px] shrink-0 items-center justify-center whitespace-nowrap border-b-4 border-r border-b-[#2bab96] border-r-[#484848] pt-0.5 text-[12px] font-semibold text-white">
        <span className="mt-[3px]">Minimum requirement</span>
        <span className="absolute right-1 top-0.5 text-[11px] font-bold leading-4">x</span>
      </div>
      <div className="ml-auto flex w-[39px] items-center justify-center bg-[#2bab96] pb-0.5 pr-px">
        <Svg w={10} h={10}>
          <path d="M5 0V10M0 5H10" stroke="#222" strokeWidth="2.2" />
        </Svg>
      </div>
    </div>
  );
}

/* ---------- side panes ---------- */

function PaneHead({ title }: { title: string }) {
  return (
    <div className="flex h-[38px] items-center pl-2 text-[16px] font-semibold text-white">
      <span className="w-[130px]">{title}</span>
      <Svg w={12} h={3} className="-mt-0.5">
        <path d="M1 .8H3M5 .8H7M9 .8H11" strokeWidth="1.8" stroke="#eee" />
      </Svg>
      <Svg w={8} h={8} className="-mt-0.5 ml-3">
        <path d="M.5 .5L3.7 4L.5 7.5M4 .5L7.2 4L4 7.5" strokeWidth="1.4" />
      </Svg>
    </div>
  );
}

const buildIcons = [
  "stackedBar", "stackedColumn", "clusteredBarOn", "clusteredColumnOn", "fullBar", "fullColumn",
  "line", "area", "stackedArea", "fullArea", "comboStacked", "comboClustered",
  "ribbonChart", "waterfall", "funnel", "scatter", "pie", "donut",
  "treemap", "globe", "shapeMap", "azure", "gauge", "card",
  "multiCard", "kpi", "slicer", "table", "matrix", "r",
  "py", "influencers", "tree", "qa", "narrative", "trophy",
  "paginated", "cardNew", "slicerNew", "arcgis", "powerApps", "automate",
];

function BuildPane() {
  return (
    <aside className="w-[182px] shrink-0 border-x border-[#5f5f5f] bg-[#141414] text-white">
      <PaneHead title="Build" />
      <div className="pl-2 text-[12px] leading-4">
        <span className="tracking-[-0.02em]!">Suggestions</span>
      </div>
      <div className="ml-2 mt-[3px] h-[214px] w-[164px] border border-[#a0a0a0] bg-black pl-[7px] pt-1.5">
        <div className="grid grid-cols-[repeat(6,18px)] gap-2">
          {buildIcons.map((n) => (
            <Visual key={n} name={n} />
          ))}
        </div>
        <Svg w={12} h={3} className="ml-[3px] mt-[15px]">
          <path d="M1 1H3M5 1H7M9 1H11" strokeWidth="2" stroke="#fff" />
        </Svg>
      </div>
      <div className="mt-[9px] pl-2 text-[12px] leading-4">Data</div>
      <div className="ml-2 mt-[3px] h-[40px] w-[164px] border border-dashed border-[#b0b0b0] bg-[#1b1b1b] p-1">
        <div className="flex h-[30px] items-center justify-center border border-[#a0a0a0] bg-[#292929] pt-0.5 text-[12px] font-semibold">
          <span className="tracking-[-0.015em]!">+Add data</span>
        </div>
      </div>
    </aside>
  );
}

function DataPane() {
  return (
    <aside className="w-[180px] shrink-0 bg-[#141414] text-white">
      <PaneHead title="Data" />
      <div className="ml-1 mt-[7px] flex h-6 w-[172px] items-center rounded border border-[#777] bg-[#212121] pl-3 text-[13px] text-[#a0a0a0]">
        <Svg w={14} h={14}>
          <circle cx="5.5" cy="5.5" r="4.8" stroke="#aaa" />
          <path d="M9 9L13.5 13.5" stroke="#aaa" />
        </Svg>
        <span className="ml-[7px] mt-px tracking-[0em]!">Search</span>
      </div>
      <ul className="mt-[10px]">
        {["bonus mapping", "Bonus Rules", "Palmoria Group emp-..."].map((t) => (
          <li key={t} className="flex h-6 items-center pl-4 text-[12px]">
            <Svg w={6} h={9} className="-mt-0.5">
              <path d="M.8 .8L5 4.5L.8 8.2" strokeWidth="1.4" />
            </Svg>
            <Svg w={12} h={12} className="-mt-0.5 ml-[7px]">
              <rect x=".6" y=".6" width="10.8" height="10.8" rx="2" strokeWidth="1.2" />
              <path d="M4.2 1V11M7.8 1V11M1 4.2H11M1 7.8H11" strokeWidth="1.1" />
            </Svg>
            <span className="ml-[6px] whitespace-nowrap tracking-[-0.028em]!">{t}</span>
          </li>
        ))}
      </ul>
    </aside>
  );
}

function ToolStrip() {
  const box = "flex h-8 shrink-0 items-center justify-center";
  return (
    <aside className="flex w-[33px] shrink-0 flex-col border-l border-[#5f5f5f] bg-[#292929]">
      <div className={`${box} border border-[#6a6a6a] bg-[#1c1c1c]`}>
        <Svg w={14} h={18}>
          <ellipse cx="7" cy="3" rx="6.2" ry="2.3" strokeWidth="1.2" />
          <path d="M.8 3V15Q1 17.3 7 17.3Q13 17.3 13.2 15V3" strokeWidth="1.2" />
        </Svg>
      </div>
      <div className={`${box} border border-[#6a6a6a] bg-[#1c1c1c]`}>
        <Svg w={18} h={19}>
          <path d="M8 17.5H.5V7.5H5.5V.5H10.5V17M10.5 5.5H15.5V8M5.5 7.5V17" />
          <path d="M9.5 9.5V16.5Q10 18.5 13.5 18.5Q17.5 18.5 17.5 16.5V9.5" fill="#1c1c1c" stroke="#e8b06a" strokeWidth="1.2" />
          <ellipse cx="13.5" cy="9.5" rx="4" ry="1.7" fill="#1c1c1c" stroke="#e8b06a" strokeWidth="1.2" />
        </Svg>
      </div>
      <div className={`${box} bg-[#1c1c1c]`}>
        <Svg w={18} h={19}>
          <path d="M4 17.5H.5V7.5H5.5V.5H10.5V11M10.5 4.5H14.5V7M5.5 7.5V13" />
          <path d="M17.5 6L9 13L11 15L17.5 8Z" fill="#777" />
          <path d="M2 17Q6 17 6 13L10 14.5Q9 19 2 17Z" fill="#2a86d8" stroke={L} />
        </Svg>
      </div>
      <div className={`${box} bg-[#1c1c1c] pr-px`}>
        <Svg w={17} h={17} className="-mt-0.5">
          <path d="M8.5 0V17M0 8.5H17" strokeWidth="1.2" />
        </Svg>
      </div>
      <div className="mt-auto flex h-8 items-center justify-center border-t border-[#5f5f5f] bg-[#1c1c1c]">
        <Svg w={20} h={20}>
          <path d="M8 1H12L13 4L15.5 5.3L18.5 4.6L20 8L17.8 10L20 12.5L18 15.5L15.5 14.8L13 16L12 19H8L7 16L4.5 14.8L2 15.5L0 12.5L2.2 10L0 8L2 4.6L4.5 5.3L7 4Z" strokeWidth="1.2" />
          <circle cx="10" cy="10" r="3" strokeWidth="1.2" />
        </Svg>
      </div>
    </aside>
  );
}

function ViewRail() {
  return (
    <aside className="flex w-[41px] shrink-0 flex-col border-r border-[#333] bg-[#141414]">
      <div className="flex h-10 items-center border-l-[3px] border-[#2bab96] pl-[11px]">
        <Svg w={15} h={15}>
          <path d="M.5 0V12.5Q.5 14.5 2.5 14.5H15" strokeWidth="1.2" />
          <path d="M4.5 12V6H6V12ZM8 12V3H9.5V12ZM11.5 12V7H13V12Z" />
        </Svg>
      </div>
      <div className="flex h-10 items-center pl-[13px]">
        <Svg w={16} h={14}>
          <rect x=".5" y=".5" width="15" height="13" />
          <path d="M.5 2H15.5" strokeWidth="2" />
          <path d="M1 5.5H15M1 9.5H15M5.5 3V13M10.5 3V13" />
        </Svg>
      </div>
      <div className="flex h-10 items-center pl-[12px]">
        <Svg w={18} h={18}>
          <path d="M.5 5.5H6.5V12.5H.5ZM11.5 .5H17.5V6.5H11.5ZM11.5 10.5H17.5V17.5H11.5ZM11.5 2.5H17.5M11.5 12.5H17.5M.5 7.5H6.5M6.5 9H9V3.5H11.5M9 9V14.5H11.5" />
        </Svg>
      </div>
      <div className="flex h-10 items-center pl-[11px]">
        <Svg w={18} h={18}>
          <path d="M2.5 7V.5H9.5L13.5 4.5V7M9.5 .5V4.5H13.5M2.5 16V17.5H12" />
          <text x="0" y="14.8" fontSize="7.5" fill={W} stroke="none" fontFamily="Open Sans" fontWeight="600">DAX</text>
          <path d="M14.5 9H17V15H14.5" />
        </Svg>
      </div>
    </aside>
  );
}

/* ---------- status bar and taskbar ---------- */

function StatusBar() {
  return (
    <footer className="flex h-[25px] items-center border-t border-[#666] bg-[#141414] pl-1 text-[12px] text-[#e0e0e0]">
      <span className="mt-px w-[1150px] tracking-[-0.015em]!">Page 4 of 5</span>
      <span className="w-[9px] text-[13px] font-bold">-</span>
      <Svg w={101} h={12}>
        <path d="M0 6.5H100" />
        <path d="M32 1V12" strokeWidth="4" />
        <path d="M50.5 4V9" />
      </Svg>
      <Svg w={8} h={8} className="ml-[5px]">
        <path d="M4 0V8M0 4H8" strokeWidth="1.2" />
      </Svg>
      <span className="ml-[13px] w-[43px]">67%</span>
      <Svg w={14} h={10}>
        <rect x=".5" y=".5" width="13" height="9" rx="1" />
        <path d="M5 2.5H3V4.5M9 2.5H11V4.5M5 7.5H3V5.5M9 7.5H11V5.5" />
      </Svg>
    </footer>
  );
}

function TaskIcon({ children, mark = "" }: { children: ReactNode; mark?: string }) {
  return (
    <div className="flex w-11 shrink-0 flex-col items-center">
      <div className="flex h-[39px] items-center justify-center pt-2">{children}</div>
      <div className={`mt-px h-[3px] rounded ${mark}`} />
    </div>
  );
}

function Taskbar() {
  return (
    <div className="flex h-12 border-t border-[#fafafa] bg-[#eeeeee] text-[#222]">
      <div className="flex w-[384px] shrink-0 pl-[18px] pt-1">
        <Svg w={33} h={28} className="mt-px">
          <path d="M5 23Q0 22 1 17Q2 13 6 13Q9 6 15 7Q20 8 21 14Q26 15 25 20Q24 23 20 23Z" fill="#a9c8f3" stroke="#8ab0e6" />
          <circle cx="20" cy="8" r="8" fill="#c42b1c" stroke="none" />
          <text x="20" y="12" fontSize="11" fill="#fff" stroke="none" textAnchor="middle" fontFamily="Open Sans">2</text>
        </Svg>
        <div className="mt-[3px] text-[12px] leading-4">
          <div className="tracking-[-0.07em]!">81°F</div>
          <div className="text-[#666] tracking-[-0.02em]!">Cloudy</div>
        </div>
      </div>
      <Svg w={23} h={23} className="mt-3">
        <defs>
          <linearGradient id="win" x1="0" y1="0" x2="1" y2="1">
            <stop offset="0" stopColor="#4cc8fb" />
            <stop offset="1" stopColor="#0069c8" />
          </linearGradient>
        </defs>
        <path d="M0 0H11V11H0ZM12 0H23V11H12ZM0 12H11V23H0ZM12 12H23V23H12Z" fill="url(#win)" stroke="none" />
      </Svg>
      <div className="ml-[14px] mt-[7px] flex h-8 w-[218px] shrink-0 items-center rounded-full border border-[#dcdcdc] bg-[#fafafa] pl-[10px]">
        <Svg w={15} h={15}>
          <circle cx="6.5" cy="6.5" r="5.5" stroke="#222" strokeWidth="1.6" />
          <path d="M10.5 10.5L14.5 14.5" stroke="#222" strokeWidth="1.6" />
        </Svg>
        <span className="-mt-px ml-[10px] w-[132px] text-[14px] text-[#5f5f5f]">Search</span>
        <Svg w={42} h={24}>
          <path d="M1 18Q8 16 13 10Q17 3 21 3Q23 7 22 19H21Q21 13 19 11Q14 17 10 19Q3 21 1 18Z" fill="#e0b050" stroke="#b88a2f" strokeWidth=".5" />
          <path d="M5 17Q12 14 17 7" stroke="#fff0c4" />
          <path d="M28 1L30 4L33 4L35 1V6L39 7V12L36 13L37 23H29L29 12L27 8Z" fill="#b576cf" stroke="#8c55ab" strokeWidth=".5" />
          <path d="M30 5L34 8L30 13L35 16L31 21" stroke="#f0a8dc" strokeWidth="1.4" />
        </Svg>
      </div>
      <div className="ml-[3px] flex">
        <TaskIcon>
          <Svg w={24} h={24}>
            <rect x="0" y="6" width="18" height="16" rx="1" fill="#2a2a2a" stroke="none" />
            <rect x="6" y="1" width="17" height="15" rx="1" fill="#f4f4f4" fillOpacity=".85" stroke="#fff" />
            <rect x="6" y="6" width="12" height="10" fill="#b8b8b8" stroke="none" />
          </Svg>
        </TaskIcon>
        <TaskIcon mark="w-1.5 bg-[#858585]">
          <Svg w={24} h={24}>
            <defs>
              <linearGradient id="edge" x1="0" y1="0" x2="1" y2=".3">
                <stop offset="0" stopColor="#1b9de2" />
                <stop offset=".6" stopColor="#2bc3d2" />
                <stop offset="1" stopColor="#5fd96a" />
              </linearGradient>
            </defs>
            <circle cx="12" cy="12" r="12" fill="#0c59a4" stroke="none" />
            <path d="M0 12A12 12 0 0 1 24 11Q24 16 18 16.5Q14 16 14.5 14Q16 11 13 9.5Q7 7 3 12Q1 15 1 17Q0 15 0 12Z" fill="url(#edge)" stroke="none" />
            <path d="M1 16Q2 9 9 9Q6 12 8 17Q11 22 18 22Q12 26 5 22Q2 19 1 16Z" fill="#1a86d8" stroke="none" />
            <path d="M14.5 14Q16 11 13 9.5Q9 10 10 14Q12 19 18 19Q22 18.5 24 17L24 14Q22 16.5 18 16.5Q14 16 14.5 14Z" fill="#eef4fa" stroke="none" />
          </Svg>
        </TaskIcon>
        <TaskIcon mark="w-6 bg-[#dcdcdc]">
          <Svg w={24} h={24}>
            <path d="M12 12L1.6 6A12 12 0 0 1 22.4 6Z" fill="#e33b2e" stroke="none" />
            <path d="M12 12L22.4 6A12 12 0 0 1 12 24Z" fill="#fbc116" stroke="none" />
            <path d="M12 12L12 24A12 12 0 0 1 1.6 6Z" fill="#2a9d4a" stroke="none" />
            <path d="M12 6H22.4A12 12 0 0 1 12 24L17 14Z" fill="#fbc116" stroke="none" />
            <circle cx="12" cy="12" r="5.8" fill="#fff" stroke="none" />
            <circle cx="12" cy="12" r="4.5" fill="#2d72e2" stroke="none" />
          </Svg>
        </TaskIcon>
        <TaskIcon mark="w-1.5 bg-[#858585]">
          <Svg w={24} h={24}>
            <path d="M0 3Q0 1 2 1H8L10 4H22Q24 4 24 6V22H0Z" fill="#f0a81c" stroke="none" />
            <path d="M0 7L9 7L11 5H24V23H0Z" fill="#ffd15a" stroke="none" />
            <path d="M4 23V18Q4 16 6 16H18Q20 16 20 18V23Z" fill="#1a76cc" stroke="none" />
            <path d="M7 20H17" stroke="#0c4f94" strokeWidth="2" />
          </Svg>
        </TaskIcon>
        <TaskIcon>
          <Svg w={24} h={24}>
            <path d="M3.5 15V3.5H13V9" stroke="#d83b1a" strokeWidth="3" strokeDasharray="3 1" />
            <path d="M15.5 4V14M5 14H16M15 14L13 20M14 14L20 15" stroke="#9aa3ab" strokeWidth="2.5" />
            <circle cx="12.5" cy="21" r="2.1" stroke="#2196e0" strokeWidth="1.8" />
            <circle cx="21" cy="14" r="2.1" stroke="#2196e0" strokeWidth="1.8" />
          </Svg>
        </TaskIcon>
        <TaskIcon>
          <Svg w={20} h={24}>
            <rect x="1" y="2" width="18" height="20" rx="1" fill="#45bfe4" stroke="none" />
            <path d="M3 0V4M6 0V4M9 0V4M12 0V4M15 0V4" stroke="#14637f" strokeWidth="1.5" />
            <path d="M4 9H16M4 13H16M4 17H13" stroke="#14637f" strokeWidth="2" />
            <path d="M1 22H19V24H1Z" fill="#8c5a38" stroke="none" />
          </Svg>
        </TaskIcon>
        <TaskIcon mark="w-1.5 bg-[#858585]">
          <Svg w={24} h={24}>
            <rect width="24" height="24" rx="4" fill="#050808" stroke="none" />
            <path d="M12 3V21M6 5L12 11L18 5V9L20 11L18 13V19L12 13L6 19V13L4 11L6 9Z" fill="#137a88" stroke="#24b4c4" strokeWidth=".8" />
          </Svg>
        </TaskIcon>
        <div className="ml-[3px] mt-1 flex h-[39px] w-[38px] flex-col items-center rounded bg-[#f9f9f9] pt-[7px]">
          <Svg w={24} h={24}>
            <rect width="24" height="24" fill="#0a74d4" stroke="none" />
            <path d="M12 0H21V24H12Z" fill="#d99a12" stroke="none" />
            <path d="M7 6H16V24H7Z" fill="#f0bd2c" stroke="none" />
            <path d="M2 12H10V24H2Z" fill="#f7d75c" stroke="none" />
          </Svg>
          <div className="mt-[4px] h-[3px] w-4 shrink-0 rounded bg-[#0a74d4]" />
        </div>
      </div>
      <div className="ml-auto flex w-[209px] shrink-0 items-center">
        <Svg w={10} h={6}>
          <path d="M.5 5.5L5 1L9.5 5.5" stroke="#222" strokeWidth="1.4" />
        </Svg>
        <Svg w={17} h={14} className="ml-[19px]">
          <path d="M4 12.5Q.5 12 .7 9Q1 6.5 4 6.5Q5 2 9 2Q12.5 2.5 13 6Q16.3 6.5 16 9.5Q15.5 12.5 12.5 12.5Z" fill="#aaa" stroke="#222" strokeWidth="1.3" />
          <path d="M2 1L15 14" stroke="#111" strokeWidth="1.4" />
        </Svg>
        <Svg w={16} h={16} className="ml-[15px]">
          <path d="M1 5L3 8L1 11H2.5L5 9.5H7.5L6 15H8L11 9.5H14Q15.5 9 15.5 8Q15.5 7 14 6.5H11L8 1H6L7.5 6.5H5L2.5 5Z" stroke="#222" strokeWidth="1.2" />
        </Svg>
        <Svg w={16} h={14} className="ml-[8px]">
          <path d="M.7 5V9H3.5L7 12.5V1.5L3.5 5Z" stroke="#222" strokeWidth="1.2" />
          <path d="M9 5Q10.5 7 9 9M11 3Q14 7 11 11M13 1Q17.5 7 13 13" stroke="#444" strokeWidth="1.1" />
        </Svg>
        <Svg w={17} h={14} className="ml-[7px]">
          <path d="M8 3.5H13.5V12.5H2V10M15.5 6V10" stroke="#222" strokeWidth="1.4" />
          <path d="M1 9Q0 4 6 0Q7 3 8 6Q7 10 1 9Z" fill="#222" stroke="none" />
          <path d="M10 5V8M8 8H12V9Q12 10.5 10 10.5Q8 10.5 8 9Z" fill="#222" stroke="#222" />
        </Svg>
        <div className="ml-auto mr-5 text-right text-[12px] leading-4">
          <div className="tracking-[-0.025em]!">8:38 AM</div>
          <div className="tracking-[-0.015em]!">7/9/2025</div>
        </div>
      </div>
    </div>
  );
}

export default function App() {
  return (
    <div className="flex h-[768px] w-[1366px] flex-col overflow-hidden bg-[#141414] font-['Open_Sans',sans-serif] **:tracking-[-0.035em]">
      <TitleBar />
      <Menu />
      <Ribbon />
      <main className="flex h-[525px]">
        <ViewRail />
        <div className="flex w-[930px] shrink-0 flex-col">
          <div className="flex">
            <Report />
            <Filters />
          </div>
          <PageTabs />
        </div>
        <BuildPane />
        <DataPane />
        <ToolStrip />
      </main>
      <StatusBar />
      <Taskbar />
    </div>
  );
}
